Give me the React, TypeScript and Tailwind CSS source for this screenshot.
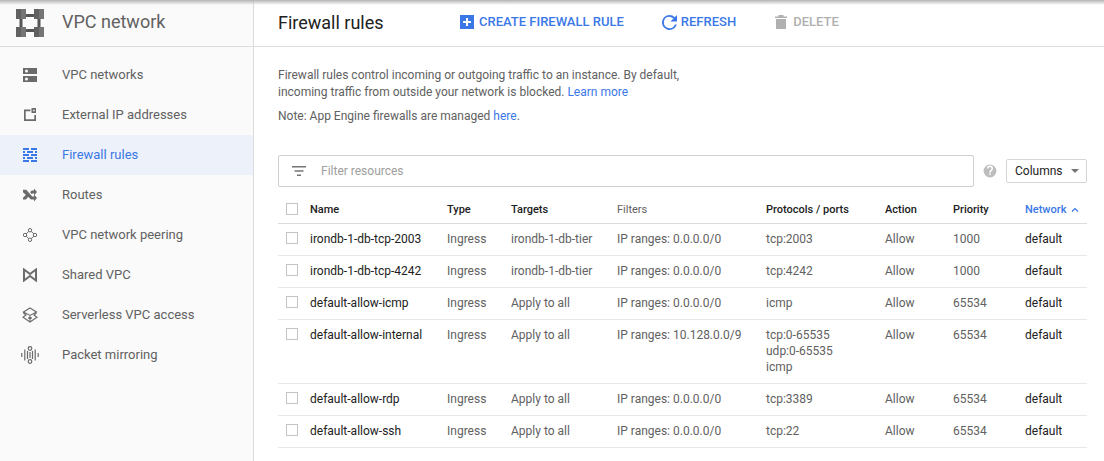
import type { ReactNode } from "react";

const NAV: { label: string; active?: boolean; icon: ReactNode }[] = [
  {
    label: "VPC networks",
    icon: (
      <svg width="14" height="14" viewBox="0 0 14 14" fill="#6b6b6b">
        <path d="M0 0h14v6H0zM0 8h14v6H0z" />
        <circle cx="3.500" cy="3" r="1.500" fill="#fafafa" />
        <circle cx="3.500" cy="11" r="1.500" fill="#fafafa" />
      </svg>
    ),
  },
  {
    label: "External IP addresses",
    icon: (
      <svg width="14" height="14" viewBox="0 0 14 14" fill="#6b6b6b">
        <path d="M1 1.500h6.500v1.700H2.700v8.100h8.600V7H13v6H1z" />
        <path d="M8.500 0H13v5H8.500z" />
        <circle cx="10.800" cy="2.500" r="1" fill="#d8d8d8" />
      </svg>
    ),
  },
  {
    label: "Firewall rules",
    active: true,
    icon: (
      <svg width="14" height="14" viewBox="0 0 14 14" fill="#3b78e7">
        <path d="M0 0h6v2H0zM8 0h6v2H8zM0 3h2v2H0zM4 3h6v2H4zM12 3h2v2h-2zM0 6h6v2H0zM8 6h6v2H8zM0 9h2v2H0zM4 9h6v2H4zM12 9h2v2h-2zM0 12h6v2H0zM8 12h6v2H8z" />
      </svg>
    ),
  },
  {
    label: "Routes",
    icon: (
      <svg width="14" height="14" viewBox="0 0 14 14" fill="#6b6b6b">
        <path d="M0 1.800h3.200L9.300 8.500H11V6.500l3 3.500-3 3.500v-2H8L0 4.300z" />
        <path d="M0 9.700 3.700 6l2 2-2.700 3.500H0zM7 4.300l1.700-1.800H11V.500l3 3.500-3 3.500v-2H9.700L8.700 6z" />
      </svg>
    ),
  },
  {
    label: "VPC network peering",
    icon: (
      <svg width="14" height="14" viewBox="0 0 14 14" fill="none" stroke="#6b6b6b" strokeWidth="1">
        <circle cx="7" cy="2.200" r="1.700" />
        <circle cx="7" cy="11.800" r="1.700" />
        <circle cx="2" cy="7" r="1.700" />
        <circle cx="12" cy="7" r="1.700" />
        <path d="m3.200 5.800 2.600-2.400M8.200 3.400l2.600 2.400M3.200 8.200l2.600 2.400M8.200 10.600l2.600-2.400" />
      </svg>
    ),
  },
  {
    label: "Shared VPC",
    icon: (
      <svg width="14" height="14" viewBox="0 0 14 14" fill="none" stroke="#6b6b6b" strokeWidth="2">
        <path d="M1 1.500 7 6l6-4.500v11L7 8l-6 4.500z" />
      </svg>
    ),
  },
  {
    label: "Serverless VPC access",
    icon: (
      <svg width="16" height="16" viewBox="0 0 16 16" fill="none" stroke="#6b6b6b" strokeWidth="1.100">
        <path d="M8 1 14.500 5 8 8.500 1.500 5zM1.500 5.500v.5L4 8 1 10.200 8 15l7-4.800L12 8l2.500-2" />
        <path d="M8 14v-4M6.300 11.500 8 9.800l1.700 1.700" />
      </svg>
    ),
  },
  {
    label: "Packet mirroring",
    icon: (
      <svg width="18" height="18" viewBox="0 0 18 18" fill="none" stroke="#6b6b6b" strokeWidth="1.200">
        <circle cx="9" cy="2.500" r="1.800" />
        <circle cx="9" cy="15.500" r="1.800" />
        <path d="M6.500 5v8M11.500 5v8M9 6v6M3.800 3.500v11M14.200 3.500v11M.8 7v4M17.200 7v4" />
      </svg>
    ),
  },
];

type Rule = {
  name: string;
  target: string;
  range: string;
  ports: string[];
  priority: string;
};

const RULES: Rule[] = [
  { name: "irondb-1-db-tcp-2003", target: "irondb-1-db-tier", range: "0.0.0.0/0", ports: ["tcp:2003"], priority: "1000" },
  { name: "irondb-1-db-tcp-4242", target: "irondb-1-db-tier", range: "0.0.0.0/0", ports: ["tcp:4242"], priority: "1000" },
  { name: "default-allow-icmp", target: "Apply to all", range: "0.0.0.0/0", ports: ["icmp"], priority: "65534" },
  { name: "default-allow-internal", target: "Apply to all", range: "10.128.0.0/9", ports: ["tcp:0-65535", "udp:0-65535", "icmp"], priority: "65534" },
  { name: "default-allow-rdp", target: "Apply to all", range: "0.0.0.0/0", ports: ["tcp:3389"], priority: "65534" },
  { name: "default-allow-ssh", target: "Apply to all", range: "0.0.0.0/0", ports: ["tcp:22"], priority: "65534" },
];

const HEAD = "h-[30px] px-0 pt-[5px] text-left text-[11px] font-medium text-[#212121]";
const CELL = "pt-[7px] pb-[8px] align-top leading-[16px] text-[#616161]";

function Checkbox() {
  return <div className="h-3 w-3 border border-[#c4c4c4] bg-white" />;
}

export default function App() {
  return (
    <div className="relative flex h-[461px] w-[1104px] overflow-hidden bg-white font-['Roboto',sans-serif] text-[12px] text-[#616161]">
      {/* top shadow from the console bar */}
      <div className="absolute inset-x-0 top-0 h-[5px] bg-gradient-to-b from-[#b4b4b4] to-transparent" />

      {/* Sidebar */}
      <aside className="h-full w-[254px] shrink-0 border-r border-[#dcdcdc] bg-[#fafafa]">
        <div className="flex h-[47px] items-center border-b border-[#dcdcdc] pl-4">
          <svg width="28" height="28" viewBox="0 0 28 28" className="shrink-0">
            <path d="M10 5h8v3h-8zM10 20h8v3h-8zM3.500 10h3v8h-3zM21.500 10h3v8h-3z" fill="#555" />
            <path d="M0 0h5v10H0zM18 0h5v10h-5zM0 18h5v10H0zM18 18h5v10h-5z" fill="#616161" />
            <path d="M5 0h5v10H5zM23 0h5v10h-5zM5 18h5v10H5zM23 18h5v10h-5z" fill="#757575" />
          </svg>
          <span className="mb-[3px] ml-[18px] text-[18px] text-[#616161]">VPC network</span>
        </div>
        <nav className="pt-[8px]">
          {NAV.map((item) => (
            <div
              key={item.label}
              className={`flex h-10 items-center text-[13px] ${item.active ? "bg-[#ecf1fa] text-[#3b78e7]" : "text-[#616161]"}`}
            >
              <span className="flex w-[62px] shrink-0 justify-center pr-[2px]">{item.icon}</span>
              <span>{item.label}</span>
            </div>
          ))}
        </nav>
      </aside>

      {/* Main */}
      <main className="min-w-0 flex-1">
        <header className="flex h-[47px] items-center border-b border-[#dcdcdc] pb-[2px] pl-[24px]">
          <h1 className="w-[182px] text-[18px] font-normal text-[#212121]">Firewall rules</h1>
          <button className="flex items-center gap-[5px] text-[13px] font-medium text-[#3b78e7]">
            <svg width="14" height="14" viewBox="0 0 14 14">
              <path d="M0 0h14v14H0z" fill="#3b78e7" />
              <path d="M6 3h2v3h3v2H8v3H6V8H3V6h3z" fill="#fff" />
            </svg>
            CREATE FIREWALL RULE
          </button>
          <button className="ml-[38px] flex items-center gap-[4px] text-[13px] font-medium text-[#3b78e7]">
            <svg width="15" height="15" viewBox="4 4 16 16" fill="#3b78e7">
              <path d="M17.650 6.350A7.960 7.960 0 0 0 12 4a8 8 0 1 0 7.730 10h-2.080A6 6 0 1 1 12 6c1.660 0 3.140.69 4.220 1.780L13 11h7V4z" />
            </svg>
            REFRESH
          </button>
          <button className="ml-[39px] flex items-center gap-[6px] text-[13px] font-medium text-[#b0b0b0]">
            <svg width="12" height="14" viewBox="0 0 12 14" fill="#b0b0b0">
              <path d="M1 4h10v10H1zM0 1.500h3.500V0h5v1.500H12V3H0z" />
            </svg>
            DELETE
          </button>
        </header>

        <div className="pl-[24px] pr-[17px]">
          <p className="mt-[20px] leading-[17px]">
            Firewall rules control incoming or outgoing traffic to an instance. By default,
            <br />
            incoming traffic from outside your network is blocked. <a className="text-[#3b78e7]">Learn more</a>
          </p>
          <p className="mt-[7px] leading-[17px]">
            Note: App Engine firewalls are managed <a className="text-[#3b78e7]">here</a>.
          </p>

          <div className="mt-[30px] flex items-center">
            <div className="flex h-8 w-[696px] items-center rounded-[2px] border border-[#d0d0d0] pl-[12px]">
              <svg width="16" height="12" viewBox="0 0 16 12" fill="#757575">
                <path d="M1 1h14v1.400H1zM3.500 5.300h9v1.400h-9zM6 9.600h4V11H6z" />
              </svg>
              <span className="ml-[14px] text-[#9e9e9e]">Filter resources</span>
            </div>
            <svg width="14" height="14" viewBox="0 0 24 24" fill="#bdbdbd" className="ml-[9px]">
              <path d="M12 1a11 11 0 1 0 0 22 11 11 0 0 0 0-22zm1.300 18h-2.600v-2.600h2.600zm2.600-8.300-1.100 1.200c-.9.9-1.500 1.600-1.500 3.300h-2.600v-.6c0-1.400.6-2.700 1.500-3.600l1.600-1.600c.5-.5.800-1.100.800-1.800a2.600 2.600 0 0 0-5.200 0H6.800a5.200 5.200 0 0 1 10.400 0c0 1.100-.5 2.200-1.300 3.100z" />
            </svg>
            <button className="ml-[9px] flex h-6 w-[81px] items-center rounded-[2px] border border-[#d6d6d6] pl-2 text-[#212121]">
              Columns
              <span className="ml-[8px] h-0 w-0 border-x-[4px] border-t-[4px] border-x-transparent border-t-[#757575]" />
            </button>
          </div>

          <table className="mt-[6px] w-[809px] table-fixed border-collapse">
            <colgroup>
              <col className="w-[32px]" />
              <col className="w-[137px]" />
              <col className="w-[64px]" />
              <col className="w-[106px]" />
              <col className="w-[149px]" />
              <col className="w-[119px]" />
              <col className="w-[68px]" />
              <col className="w-[72px]" />
              <col className="w-[62px]" />
            </colgroup>
            <thead>
              <tr className="border-b border-[#dcdcdc]">
                <th className="pl-2 pt-[3px] align-middle">
                  <Checkbox />
                </th>
                <th className={HEAD}>Name</th>
                <th className={HEAD}>Type</th>
                <th className={HEAD}>Targets</th>
                <th className={`${HEAD} !font-normal !text-[#616161]`}>Filters</th>
                <th className={HEAD}>Protocols / ports</th>
                <th className={HEAD}>Action</th>
                <th className={HEAD}>Priority</th>
                <th className={`${HEAD} whitespace-nowrap !text-[#3b78e7]`}>
                  Network
                  <svg width="8" height="6" viewBox="0 0 8 6" fill="none" stroke="#3b78e7" strokeWidth="1.200" className="ml-[5px] inline">
                    <path d="m1 4.500 3-3 3 3" />
                  </svg>
                </th>
              </tr>
            </thead>
            <tbody>
              {RULES.map((rule) => (
                <tr key={rule.name} className="border-b border-[#e8e8e8]">
                  <td className="pl-2 pt-[8px] align-top">
                    <Checkbox />
                  </td>
                  <td className={`${CELL} !text-[#212121]`}>{rule.name}</td>
                  <td className={CELL}>Ingress</td>
                  <td className={CELL}>{rule.target}</td>
                  <td className={CELL}>IP ranges: {rule.range}</td>
                  <td className={CELL}>
                    {rule.ports.map((p) => (
                      <div key={p}>{p}</div>
                    ))}
                  </td>
                  <td className={CELL}>Allow</td>
                  <td className={CELL}>{rule.priority}</td>
                  <td className={`${CELL} !text-[#212121]`}>default</td>
                </tr>
              ))}
            </tbody>
          </table>
        </div>
      </main>
    </div>
  );
}
